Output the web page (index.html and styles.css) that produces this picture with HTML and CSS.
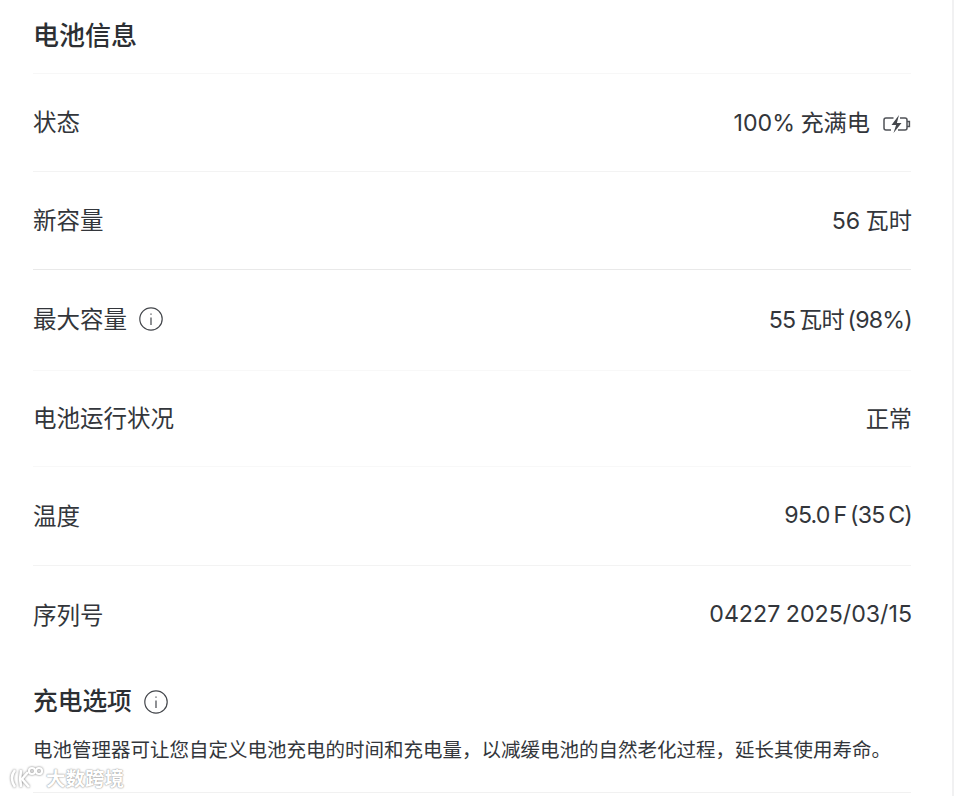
FILE: index.html
```html
<!DOCTYPE html>
<html lang="zh-CN">
<head>
  <meta charset="UTF-8" />
  <title>电池信息</title>
  <link rel="stylesheet" href="styles.css">
</head>
<body>
  <main class="panel">
    <h1 class="title">电池信息</h1>
    <div class="rows">
      <div class="row">
        <span class="label">状态</span>
        <span class="value">100% 充满电
          <svg class="battery" width="28" height="20" viewBox="0 0 28 20" fill="none" stroke="#4f5257" stroke-width="1.5">
            <path d="M10.5 4H3a2 2 0 0 0-2 2v8a2 2 0 0 0 2 2h5"/>
            <path d="M17 4h5a2 2 0 0 1 2 2v8a2 2 0 0 1-2 2h-7"/>
            <path d="M24 7.5h2.4v5H24"/>
            <path d="M16 1 8.5 11h4.6L10.5 19l8-10h-4.6z" fill="#44474c" stroke="none"/>
          </svg>
        </span>
      </div>
      <div class="row strong">
        <span class="label">新容量</span>
        <span class="value">56 瓦时</span>
      </div>
      <div class="row tall faint">
        <span class="label">最大容量
          <svg class="info" width="24" height="24" viewBox="0 0 24 24" fill="none" stroke="#44474c" stroke-width="1.2">
            <circle cx="12" cy="12" r="11.2"/>
            <path d="M12 10.5v7.5"/>
            <path d="M12 6.4v1.4"/>
          </svg>
        </span>
        <span class="value tight">55 瓦时 (98%)</span>
      </div>
      <div class="row short faint">
        <span class="label">电池运行状况</span>
        <span class="value">正常</span>
      </div>
      <div class="row wide">
        <span class="label">温度</span>
        <span class="value tight">95.0 F (35 C)</span>
      </div>
      <div class="row last">
        <span class="label">序列号</span>
        <span class="value">04227 2025/03/15</span>
      </div>
    </div>
    <section class="charge">
      <h2 class="subtitle">充电选项
        <svg class="info" width="24" height="24" viewBox="0 0 24 24" fill="none" stroke="#44474c" stroke-width="1.2">
          <circle cx="12" cy="12" r="11.2"/>
          <path d="M12 10.5v7.5"/>
          <path d="M12 6.4v1.4"/>
        </svg>
      </h2>
      <p class="desc">电池管理器可让您自定义电池充电的时间和充电量，以减缓电池的自然老化过程，延长其使用寿命。</p>
    </section>
  </main>
  <div class="watermark">
    <svg width="34" height="24" viewBox="0 0 34 24" fill="none" stroke="#fff" stroke-width="2.6">
      <path d="M6 4C2 9 2 15 6 21"/>
      <path d="M12 4c-1 5-1 12 0 17"/>
      <path d="M19 6l-6 7 7 8"/>
      <circle cx="23" cy="5" r="3" stroke-width="2.2"/>
      <circle cx="30" cy="5" r="3" stroke-width="2.2"/>
    </svg>
    <span>大数跨境</span>
  </div>
</body>
</html>
```

FILE: styles.css
```css
body {
  margin: 0;
  height: 796px;
  overflow: hidden;
  background: #fff;
  color: #33363b;
  font-family: "Inter", "Noto Sans CJK SC", sans-serif;
  border-right: 2px solid #f1f1f2;
  box-sizing: border-box;
  position: relative;
}
.panel {
  padding: 0 41px 0 33px;
  display: flex;
  flex-direction: column;
}
.title {
  margin: 0;
  height: 73px;
  line-height: 71px;
  font-size: 26px;
  font-weight: 500;
  color: #2c2f33;
}
.rows {
  border-top: 1px solid #f7f7f7;
}
.row {
  height: 98px;
  padding-bottom: 3px;
  box-sizing: border-box;
  display: flex;
  align-items: center;
  justify-content: space-between;
  border-bottom: 1px solid #f3f3f3;
}
.row.strong {
  border-bottom-color: #e9e9e9;
}
.row.faint {
  border-bottom-color: #f8f8f8;
}
.row.tall {
  height: 101px;
  padding-bottom: 4px;
}
.row.short {
  height: 96px;
  padding-bottom: 4px;
}
.row.wide {
  height: 99px;
}
.row.last {
  border-bottom: 0;
}
.label {
  display: flex;
  align-items: center;
  gap: 12px;
  font-size: 23.5px;
}
.value {
  display: flex;
  align-items: center;
  gap: 13px;
  margin-right: -1px;
  font-size: 23.2px;
  word-spacing: -1px;
}
.value.tight {
  letter-spacing: -0.8px;
  word-spacing: -2px;
}
.battery {
  margin: 6px 1px 0 0;
}
.info {
  margin-top: 2px;
}
.charge {
  border-bottom: 1px solid #f1f1f1;
  height: 129px;
  box-sizing: border-box;
}
.subtitle {
  margin: 0;
  padding-top: 21px;
  display: flex;
  align-items: center;
  gap: 12px;
  font-size: 24.7px;
  font-weight: 500;
  line-height: 32px;
  color: #2c2f33;
}
.desc {
  margin: 19px 0 0;
  font-size: 19.5px;
  line-height: 28px;
  white-space: nowrap;
}
.watermark {
  position: absolute;
  left: 9px;
  bottom: 4px;
  display: flex;
  align-items: center;
  gap: 3px;
  color: #fff;
  font-size: 19.5px;
  font-weight: 700;
  text-shadow: 0 0 2px #9a9a9a, 0 0 1px #9a9a9a;
}
.watermark svg {
  filter: drop-shadow(0 0 1px #777);
}
```
